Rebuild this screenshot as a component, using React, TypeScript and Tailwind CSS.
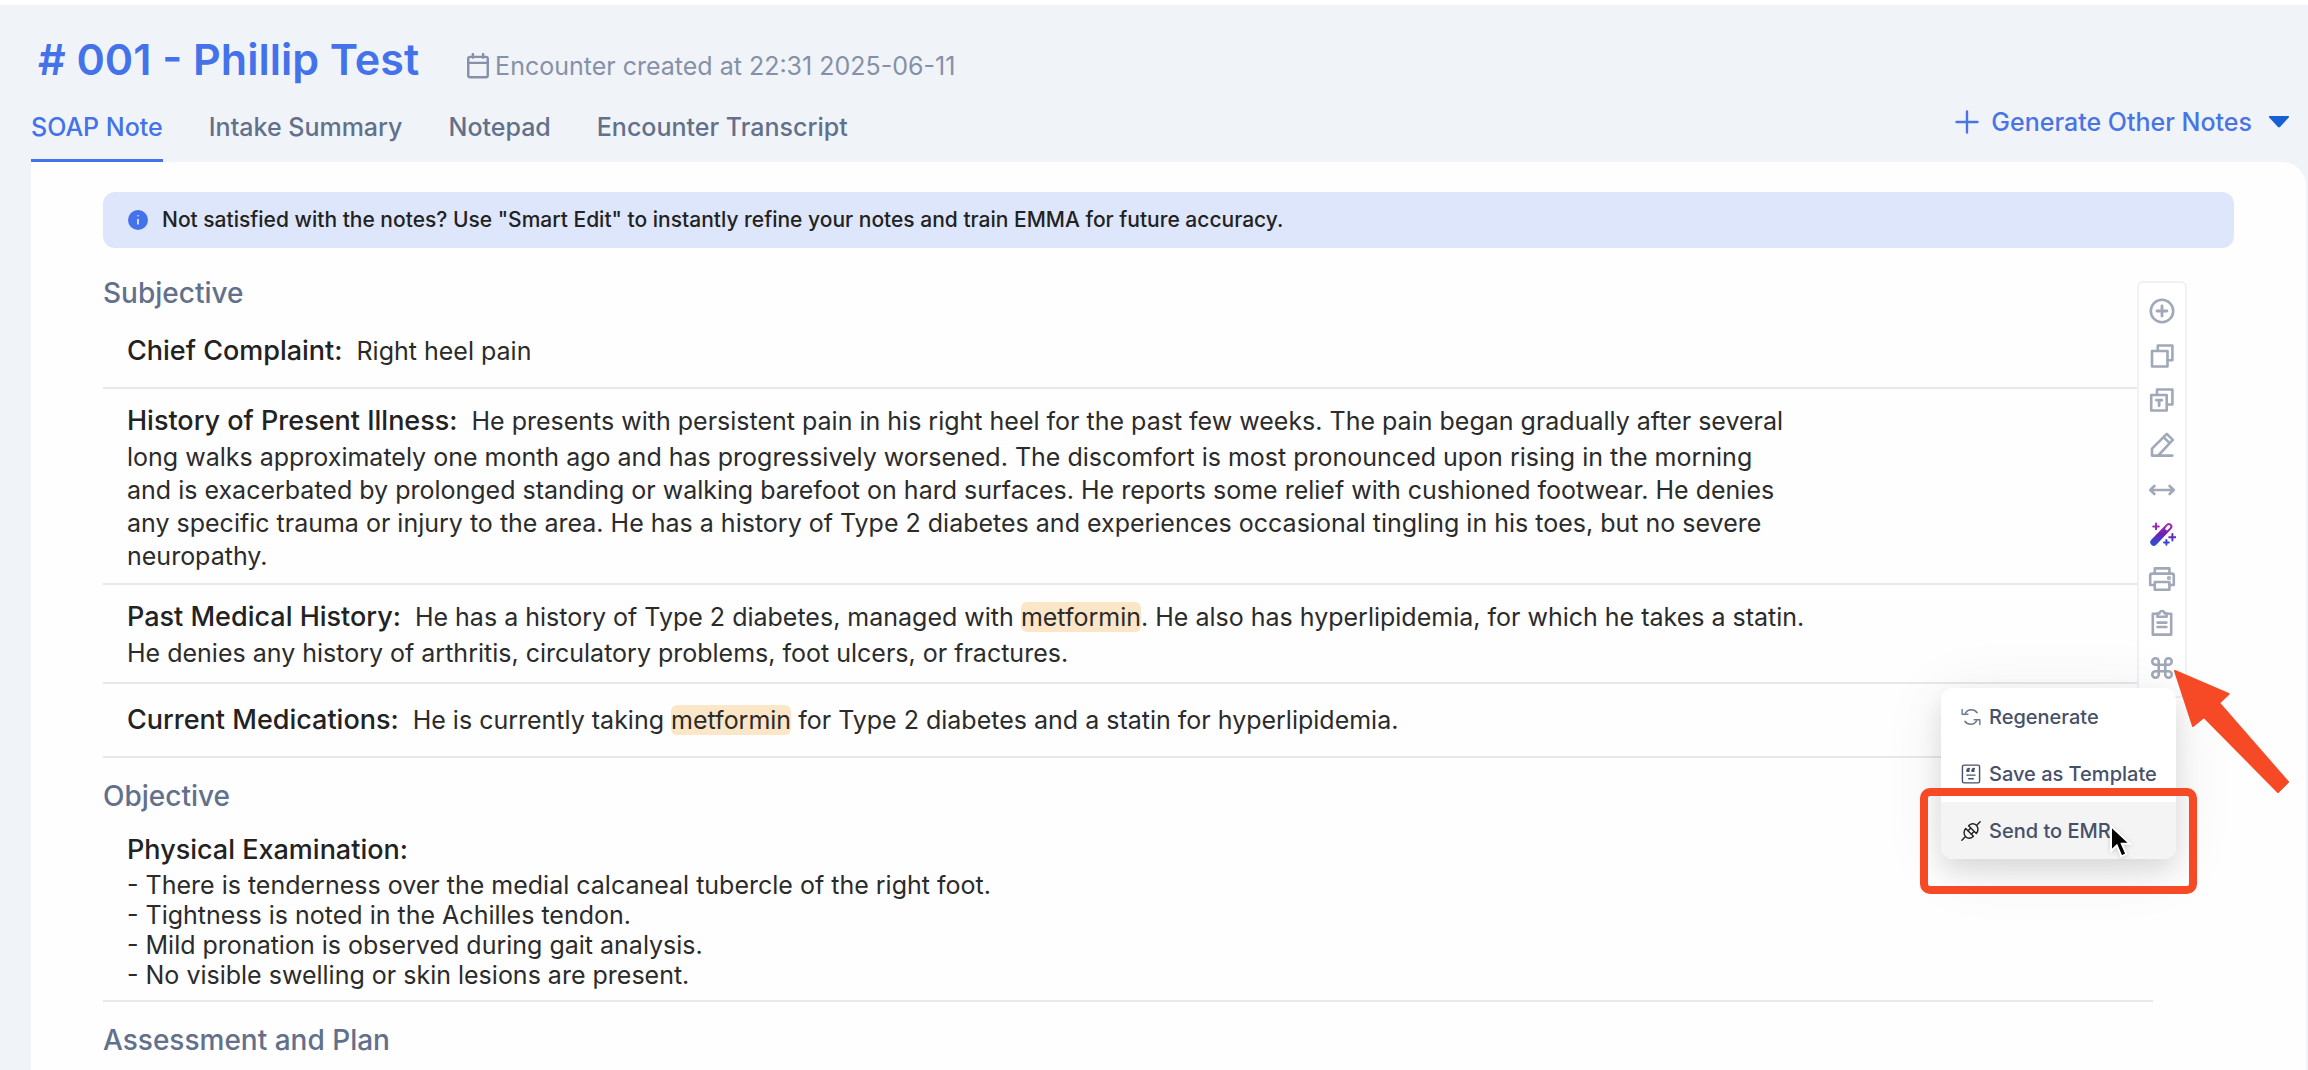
import { ReactNode } from "react";
import { Command } from "lucide-react";

const tabs = ["SOAP Note", "Intake Summary", "Notepad", "Encounter Transcript"];

const examFindings = [
    "There is tenderness over the medial calcaneal tubercle of the right foot.",
    "Tightness is noted in the Achilles tendon.",
    "Mild pronation is observed during gait analysis.",
    "No visible swelling or skin lesions are present.",
];

function Icon({ children, size = 28 }: { children: ReactNode; size?: number }) {
    return (
        <svg
            width={size}
            height={size}
            viewBox="0 0 28 28"
            fill="none"
            stroke="currentColor"
            strokeWidth="2.6"
            strokeLinecap="round"
            strokeLinejoin="round"
            className="shrink-0"
            aria-hidden="true"
        >
            {children}
        </svg>
    );
}

const tools = [
    {
        name: "Add",
        icon: (
            <Icon>
                <circle cx="14" cy="14" r="11.2" />
                <path d="M14 9v10M9 14h10" strokeWidth="2.8" />
            </Icon>
        ),
    },
    {
        name: "Copy",
        icon: (
            <Icon>
                <rect x="4" y="9" width="15.5" height="15.5" />
                <path d="M9.8 8.5V3.5h14.6v14.8h-4.8" />
            </Icon>
        ),
    },
    {
        name: "Copy as text",
        icon: (
            <Icon>
                <rect x="3.2" y="9" width="15.5" height="15.5" />
                <path d="M9 8.5V3.5h15.4v15h-5" />
                <path d="M8.4 14.2h5.4M11.1 14.2v5.6" strokeWidth="2.8" />
            </Icon>
        ),
    },
    {
        name: "Edit",
        icon: (
            <Icon>
                <path d="M4 24.6v-7L18.8 2.8l6 6L10.6 24.2M15.6 6.2l6 6M4 24.6h20.4" />
            </Icon>
        ),
    },
    {
        name: "Expand",
        icon: (
            <Icon>
                <path d="M2.4 14h23.2M6.4 10l-4.2 4 4.2 4M21.6 10l4.2 4-4.2 4" />
            </Icon>
        ),
    },
    {
        name: "Smart Edit",
        icon: (
            <svg width="28" height="28" viewBox="0 0 28 28" fill="none" strokeLinecap="round" aria-hidden="true">
                <defs>
                    <linearGradient id="wand" x1="14" y1="2" x2="14" y2="26" gradientUnits="userSpaceOnUse">
                        <stop stopColor="#b52bb5" />
                        <stop offset="0.5" stopColor="#6f22b0" />
                        <stop offset="1" stopColor="#1f55e0" />
                    </linearGradient>
                </defs>
                <path d="M5.8 22.2 20.8 6.6" stroke="url(#wand)" strokeWidth="7" />
                <path d="m18.8 8.7 2-2.1" stroke="#fff" strokeWidth="3" />
                <path
                    d="M8 3.6v5.6M5.2 6.4h5.6M24.4 14v6.4M21.2 17.2h6.4M18.4 20v4.8M16 22.4h4.8"
                    stroke="url(#wand)"
                    strokeWidth="2"
                />
            </svg>
        ),
    },
    {
        name: "Print",
        icon: (
            <Icon>
                <path d="M6.8 8.4V3.4h14.6v5M6.4 20H2.2V10.6q0-2 2-2h19.6q2 0 2 2V20h-4.2" />
                <rect x="6.8" y="17" width="14.6" height="7.8" />
                <circle cx="21" cy="13" r="0.8" />
            </Icon>
        ),
    },
    {
        name: "Clipboard",
        icon: (
            <Icon>
                <path d="M9 4.8H4.8v20.8h18.4V4.8H19M9.4 4.4h2Q12 2 14 2t2.6 2.4h2v3.4H9.4zM9.6 13.6h8.8M9.6 18h8.8" />
            </Icon>
        ),
    },
    { name: "Shortcuts", icon: <Command size={26} strokeWidth={2.4} aria-hidden="true" /> },
];

const menuItems = [
    {
        label: "Regenerate",
        icon: (
            <g strokeWidth="2" stroke="#6b7a90">
                <path d="M6 8.6A10 10 0 0 1 22.6 8M22 19.4A10 10 0 0 1 5.4 20" />
                <path d="M1.6 3.4v6.8h8M26.4 24.6v-6.8h-8" />
            </g>
        ),
    },
    {
        label: "Save as Template",
        icon: (
            <g strokeWidth="2" stroke="#475069">
                <rect x="2" y="1.6" width="24" height="24.8" rx="2.4" />
                <path d="M8.4 15.6h11.2M10.8 20.6h6.4" />
                <path d="M11.4 6.6Q8.6 7 8.6 9.8h2.4M18.4 6.6q-2.8.4-2.8 3.2H18" strokeWidth="2.6" />
            </g>
        ),
    },
    {
        label: "Send to EMR",
        icon: (
            <g strokeWidth="2" stroke="#222">
                <path d="m1.2 26.8 4.8-4.8M22 6l4.8-4.8" />
                <path d="m6.6 10.6 10.8 10.8c-3 3.4-7.8 3.8-10.8.8s-3.2-8.4 0-11.6z" />
                <path d="M21.4 17.4 10.6 6.6c3-3.4 7.8-3.8 10.8-.8s3.2 8.4 0 11.6z" />
                <path d="m9.8 13.8 3.4-3.4M14.4 18.4l3.4-3.4" />
            </g>
        ),
    },
];

function SectionTitle({ children }: { children: ReactNode }) {
    return <h2 className="text-[28px] leading-[40px] font-medium text-[#62708c]">{children}</h2>;
}

function Label({ children }: { children: ReactNode }) {
    return <h3 className="mr-[14px] inline text-[27px] leading-[40px] font-medium text-[#222]">{children}</h3>;
}

function Highlight({ children }: { children: ReactNode }) {
    return <mark className="rounded-md bg-[#fce6c8] text-inherit">{children}</mark>;
}

function ToolRail() {
    return (
        <aside className="relative z-10 mt-2 -ml-4 w-[50px] shrink-0 self-start">
            <div className="flex h-[417px] flex-col items-center justify-between rounded-md border-2 border-[#f0f1f4] bg-white py-[14px]">
                {tools.map((tool) => (
                    <button key={tool.name} aria-label={tool.name} className="flex size-7 items-center justify-center text-[#a1a8b8]">
                        {tool.icon}
                    </button>
                ))}
            </div>

            <div
                role="menu"
                className="absolute top-[407px] right-[11px] w-[235px] overflow-hidden rounded-xl bg-white shadow-[0_12px_24px_rgba(0,0,0,0.10),0_8px_64px_rgba(0,0,0,0.08)]"
            >
                {menuItems.map((item) => (
                    <button
                        key={item.label}
                        role="menuitem"
                        className="flex h-[57px] w-full items-center gap-2 pl-5 text-[20px] font-medium whitespace-nowrap text-[#475069] last:bg-[#f4f4f5]"
                    >
                        <Icon size={20}>{item.icon}</Icon>
                        {item.label}
                    </button>
                ))}
            </div>

            {/* callout around the last menu item */}
            <div className="pointer-events-none absolute top-[507px] -right-[10px] h-[106px] w-[277px] rounded-[10px] border-8 border-[#f54a25]" />
            <svg
                className="pointer-events-none absolute top-[386px] left-[34px]"
                width="122"
                height="130"
                viewBox="0 0 122 130"
                fill="#f54a25"
                stroke="#f54a25"
                strokeWidth="2"
                strokeLinejoin="round"
            >
                <path d="M4 4 57.5 27 48 36 117 115 107 125 33 50 22 59z" />
            </svg>
            <svg className="pointer-events-none absolute top-[543px] -left-[28px] drop-shadow-sm" width="24" height="36" viewBox="0 0 24 36">
                <path d="M2 2v25l5.8-5.5 4.6 10.8 5-2.2-4.6-10.4H21z" fill="#000" stroke="#fff" strokeWidth="2" />
            </svg>
        </aside>
    );
}

export default function App() {
    return (
        <div className="flex min-h-screen flex-col border-t-[5px] border-white bg-[#f0f4f8] font-[Inter,sans-serif]">
            <header className="flex items-end justify-between pr-[18px] pl-[31px]">
                <div>
                    <div className="flex items-end gap-[46px] pt-[26px] pl-[7px]">
                        <h1 className="text-[43px] leading-[56px] font-semibold text-[#4372eb]"># 001 - Phillip Test</h1>
                        <p className="flex items-center gap-1 text-[25px] leading-[42px] text-[#8690a8]">
                            <Icon size={26}>
                                <rect x="3.5" y="4.2" width="21" height="22" rx="2" />
                                <path d="M3.5 10.6h21M8.5 1v4M19.5 1v4" />
                            </Icon>
                            Encounter created at 22:31 2025-06-11
                        </p>
                    </div>
                    <nav className="mt-[22px] flex gap-[46px]">
                        {tabs.map((tab, i) => (
                            <a
                                key={tab}
                                href="#"
                                className={
                                    i === 0
                                        ? "border-b-3 border-[#4372eb] pb-[14px] text-[25px] leading-[36px] font-medium text-[#4372eb]"
                                        : "pb-[14px] text-[25px] leading-[36px] font-medium text-[#62708c]"
                                }
                            >
                                {tab}
                            </a>
                        ))}
                    </nav>
                </div>
                <button className="mb-[22px] flex items-center text-[25px] leading-[36px] font-medium text-[#4a74e4]">
                    <svg
                        className="mr-3"
                        width="24"
                        height="24"
                        viewBox="0 0 24 24"
                        stroke="currentColor"
                        strokeWidth="2.4"
                        strokeLinecap="round"
                        aria-hidden="true"
                    >
                        <path d="M12 1.5v21M1.5 12h21" />
                    </svg>
                    Generate Other Notes
                    <svg className="ml-4" width="22" height="12" viewBox="0 0 22 12" fill="#1560d4" aria-hidden="true">
                        <path d="M1.5 0h19q1 .6.3 1.5L12 11q-1 .8-2 0L1.2 1.5Q.6.5 1.5 0z" />
                    </svg>
                </button>
            </header>

            <main className="mr-[2px] ml-[31px] flex-1 rounded-tr-3xl bg-[#fefefe] pt-[30px] pl-[72px]">
                <div className="mr-[72px] flex h-14 items-center gap-[14px] rounded-xl bg-[#dee6fb] pl-[25px] text-[21px] font-medium text-[#222]">
                    <svg width="20" height="20" viewBox="0 0 20 20" aria-hidden="true">
                        <circle cx="10" cy="10" r="10" fill="#4372eb" />
                        <path d="M10 9v5.5M10 5.3v1" stroke="#dee6fb" strokeWidth="1.8" />
                    </svg>
                    Not satisfied with the notes? Use "Smart Edit" to instantly refine your notes and train EMMA for future accuracy.
                </div>

                <div className="mr-[119px] flex pt-[25px]">
                    <article className="min-w-0 flex-1 text-[25px] leading-[33px] text-[#2b2b2b]">
                        <SectionTitle>Subjective</SectionTitle>
                        <section className="border-b-2 border-[#e6e8ec] px-6 pt-[18px] pb-4">
                            <Label>Chief Complaint:</Label>
                            Right heel pain
                        </section>
                        <section className="border-b-2 border-[#e6e8ec] px-6 pt-3 pb-[10px]">
                            <Label>History of Present Illness:</Label>
                            He presents with persistent pain in his right heel for the past few weeks. The pain began gradually after several
                            <br />
                            long walks approximately one month ago and has progressively worsened. The discomfort is most pronounced upon rising in the morning
                            <br />
                            and is exacerbated by prolonged standing or walking barefoot on hard surfaces. He reports some relief with cushioned footwear. He denies
                            <br />
                            any specific trauma or injury to the area. He has a history of Type 2 diabetes and experiences occasional tingling in his toes, but no severe
                            <br />
                            neuropathy.
                        </section>
                        <section className="border-b-2 border-[#e6e8ec] px-6 pt-3 pb-3">
                            <Label>Past Medical History:</Label>
                            He has a history of Type 2 diabetes, managed with <Highlight>metformin</Highlight>. He also has hyperlipidemia, for which he takes a statin.
                            <br />
                            He denies any history of arthritis, circulatory problems, foot ulcers, or fractures.
                        </section>
                        <section className="border-b-2 border-[#e6e8ec] px-6 pt-4 pb-4">
                            <Label>Current Medications:</Label>
                            He is currently taking <Highlight>metformin</Highlight> for Type 2 diabetes and a statin for hyperlipidemia.
                        </section>

                        <div className="pt-[18px]">
                            <SectionTitle>Objective</SectionTitle>
                        </div>
                        <section className="border-b-2 border-[#e6e8ec] px-6 pt-[14px] pb-[10px]">
                            <Label>Physical Examination:</Label>
                            <ul className="leading-[30px]">
                                {examFindings.map((finding) => (
                                    <li key={finding}>- {finding}</li>
                                ))}
                            </ul>
                        </section>

                        <div className="pt-[18px]">
                            <SectionTitle>Assessment and Plan</SectionTitle>
                        </div>
                    </article>
                    <ToolRail />
                </div>
            </main>
        </div>
    );
}
